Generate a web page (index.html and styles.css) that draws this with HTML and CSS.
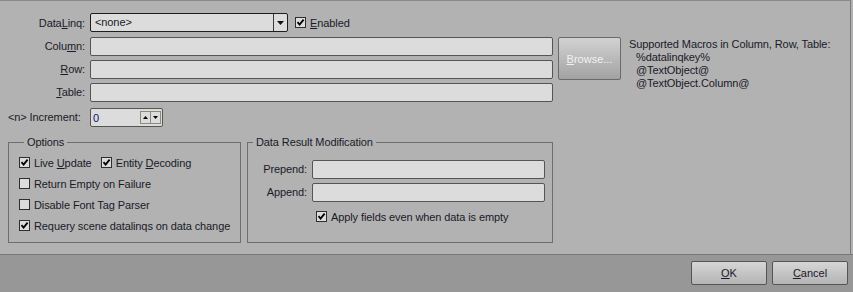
FILE: index.html
```html
<!DOCTYPE html>
<html lang="en">
<head>
  <meta charset="UTF-8" />
  <title>DataLinq</title>
  <link rel="stylesheet" href="styles.css">
</head>
<body>
  <div class="panel">
    <div class="fields">
      <label class="lbl">Data<u>L</u>inq:</label>
      <div class="combo-row">
        <div class="combo">
          <span class="combo-text">&lt;none&gt;</span>
          <span class="combo-btn"><svg width="7" height="4" viewBox="0 0 7 4"><path d="M0 0H7L3.5 4Z" fill="#111"/></svg></span>
        </div>
        <label class="check"><span class="cb on"><svg width="9" height="9" viewBox="0 0 9 9"><path d="M1.5 4.2L3.6 6.6L7.6 1.6" fill="none" stroke="#000" stroke-width="1.8"/></svg></span><span><u>E</u>nabled</span></label>
      </div>

      <label class="lbl">Colu<u>m</u>n:</label>
      <div class="input"></div>
      <button class="browse"><u>B</u>rowse...</button>
      <div class="macros">
        <div>Supported Macros in Column, Row, Table:</div>
        <div class="indent">%datalinqkey%</div>
        <div class="indent">@TextObject@</div>
        <div class="indent">@TextObject.Column@</div>
      </div>

      <label class="lbl"><u>R</u>ow:</label>
      <div class="input"></div>

      <label class="lbl"><u>T</u>able:</label>
      <div class="input"></div>

      <label class="lbl inc">&lt;n&gt; Increment:</label>
      <div class="spin">
        <span class="spin-val">0</span>
        <span class="spin-btns">
          <span class="sb"><svg width="5" height="3" viewBox="0 0 5 3"><path d="M0 3H5L2.5 0Z" fill="#000"/></svg></span>
          <span class="sb"><svg width="5" height="3" viewBox="0 0 5 3"><path d="M0 0H5L2.5 3Z" fill="#000"/></svg></span>
        </span>
      </div>
    </div>

    <div class="groups">
      <fieldset class="group options">
        <legend>Options</legend>
        <div class="opt-row">
          <label class="check"><span class="cb on"><svg width="9" height="9" viewBox="0 0 9 9"><path d="M1.5 4.2L3.6 6.6L7.6 1.6" fill="none" stroke="#000" stroke-width="1.8"/></svg></span><span>Live <u>U</u>pdate</span></label>
          <label class="check"><span class="cb on"><svg width="9" height="9" viewBox="0 0 9 9"><path d="M1.5 4.2L3.6 6.6L7.6 1.6" fill="none" stroke="#000" stroke-width="1.8"/></svg></span><span>Entity <u>D</u>ecoding</span></label>
        </div>
        <div class="opt-row">
          <label class="check"><span class="cb"></span><span>Return Empty on Failure</span></label>
        </div>
        <div class="opt-row">
          <label class="check"><span class="cb"></span><span>Disable Font Tag Parser</span></label>
        </div>
        <div class="opt-row">
          <label class="check"><span class="cb on"><svg width="9" height="9" viewBox="0 0 9 9"><path d="M1.5 4.2L3.6 6.6L7.6 1.6" fill="none" stroke="#000" stroke-width="1.8"/></svg></span><span>Requery scene datalinqs on data change</span></label>
        </div>
      </fieldset>

      <fieldset class="group result">
        <legend>Data Result Modification</legend>
        <div class="result-grid">
          <label class="lbl">Prepend:</label>
          <div class="input"></div>
          <label class="lbl">Append:</label>
          <div class="input"></div>
          <label class="check apply"><span class="cb on"><svg width="9" height="9" viewBox="0 0 9 9"><path d="M1.5 4.2L3.6 6.6L7.6 1.6" fill="none" stroke="#000" stroke-width="1.8"/></svg></span><span>Apply fields even when data is empty</span></label>
        </div>
      </fieldset>
    </div>
  </div>

  <div class="footer">
    <button class="btn"><u>O</u>K</button>
    <button class="btn"><u>C</u>ancel</button>
  </div>
</body>
</html>
```

FILE: styles.css
```css
body {
  margin: 0;
  width: 853px;
  height: 292px;
  overflow: hidden;
  background: #b2b2b2;
  font-family: "Liberation Sans", Arial, sans-serif;
  font-size: 11px;
  letter-spacing: -0.1px;
  color: #1a1a28;
}
u {
  text-decoration: underline;
  text-underline-offset: 1px;
}
.panel {
  box-sizing: border-box;
  width: 851px;
  height: 254px;
  border-top: 1px solid #8a8a8a;
  border-right: 1px solid #7a7a7a;
  padding: 13px 0 0 8px;
}
.fields {
  display: grid;
  grid-template-columns: 77px 463px 63px auto;
  grid-auto-rows: 19px;
  column-gap: 5px;
  row-gap: 4px;
}
.lbl {
  text-align: right;
  line-height: 19px;
  white-space: nowrap;
}
.fields > .lbl {
  grid-column: 1;
}
.combo-row {
  grid-column: 2 / -1;
  display: flex;
  align-items: center;
  gap: 7px;
  margin-bottom: 2px;
}
.fields > .lbl:first-child {
  margin-bottom: 2px;
}
.combo {
  box-sizing: border-box;
  width: 198px;
  height: 19px;
  display: flex;
  border: 1px solid #1e1e1e;
  border-radius: 2px;
  background: #dcdcdc;
}
.combo-text {
  flex: 1;
  padding-left: 4px;
  line-height: 17px;
}
.combo-btn {
  width: 13px;
  border-left: 1px solid #3a3a3a;
  display: flex;
  align-items: center;
  justify-content: center;
}
.input {
  box-sizing: border-box;
  height: 19px;
  border: 1px solid #555;
  border-radius: 2px;
  background: #dcdcdc;
}
.fields > .input {
  grid-column: 2;
}
.browse {
  grid-column: 3;
  grid-row: 2 / span 2;
  box-sizing: border-box;
  margin: 0;
  height: 43px;
  border: 1px solid #6a6a6a;
  border-radius: 2px;
  background: linear-gradient(#d2d2d2, #a2a2a2);
  color: #f2f2f2;
  font: inherit;
  padding: 0;
}
.macros {
  grid-column: 4;
  grid-row: 2 / span 4;
  margin-left: 3px;
  line-height: 13px;
  padding-top: 1px;
  white-space: nowrap;
}
.macros .indent {
  padding-left: 7px;
}
.fields > .inc {
  margin-top: 2px;
  text-align: left;
}
.spin {
  grid-column: 2;
  margin-top: 2px;
  box-sizing: border-box;
  width: 73px;
  height: 19px;
  display: flex;
  align-items: center;
  border: 1px solid #555;
  border-radius: 2px;
  background: #dcdcdc;
}
.spin-val {
  flex: 1;
  padding-left: 2px;
  color: #10106a;
}
.spin-btns {
  display: flex;
  margin-right: 1px;
  border: 1px solid #8e8a78;
}
.sb {
  width: 9px;
  height: 11px;
  display: flex;
  align-items: center;
  justify-content: center;
}
.sb + .sb {
  border-left: 1px solid #8e8a78;
}
.check {
  display: flex;
  align-items: center;
  gap: 4px;
  white-space: nowrap;
}
.cb {
  box-sizing: border-box;
  width: 11px;
  height: 11px;
  border: 1px solid #2e2e2e;
  background: #dcdcdc;
  display: flex;
  align-items: center;
  justify-content: center;
}
.groups {
  display: flex;
  gap: 6px;
  margin-top: 11px;
}
.group {
  box-sizing: border-box;
  margin: 0;
  border: 1px solid #6e6e6e;
  height: 107px;
}
.group legend {
  padding: 0 3px;
  margin-left: 5px;
  line-height: 13px;
}
.options {
  width: 233px;
  padding: 3px 0 0 10px;
}
.opt-row {
  height: 21px;
  display: flex;
  align-items: center;
  gap: 9px;
}
.result {
  width: 306px;
  padding: 11px 0 0 0;
}
.result-grid {
  display: grid;
  grid-template-columns: 59px 233px;
  grid-auto-rows: 19px;
  column-gap: 5px;
  row-gap: 4px;
}
.result-grid .apply {
  grid-column: 2;
  margin-left: 4px;
  margin-top: 2px;
}
.footer {
  box-sizing: border-box;
  height: 38px;
  border-top: 1px solid #7a7a7a;
  background: #979797;
  display: flex;
  justify-content: flex-end;
  gap: 5px;
  padding: 6px 5px 0 0;
}
.btn {
  box-sizing: border-box;
  width: 76px;
  height: 24px;
  margin: 0;
  border: 1px solid #555;
  border-radius: 2px;
  background: linear-gradient(#d6d6d6, #b4b4b4);
  font: inherit;
  color: #1a1a28;
}
```
